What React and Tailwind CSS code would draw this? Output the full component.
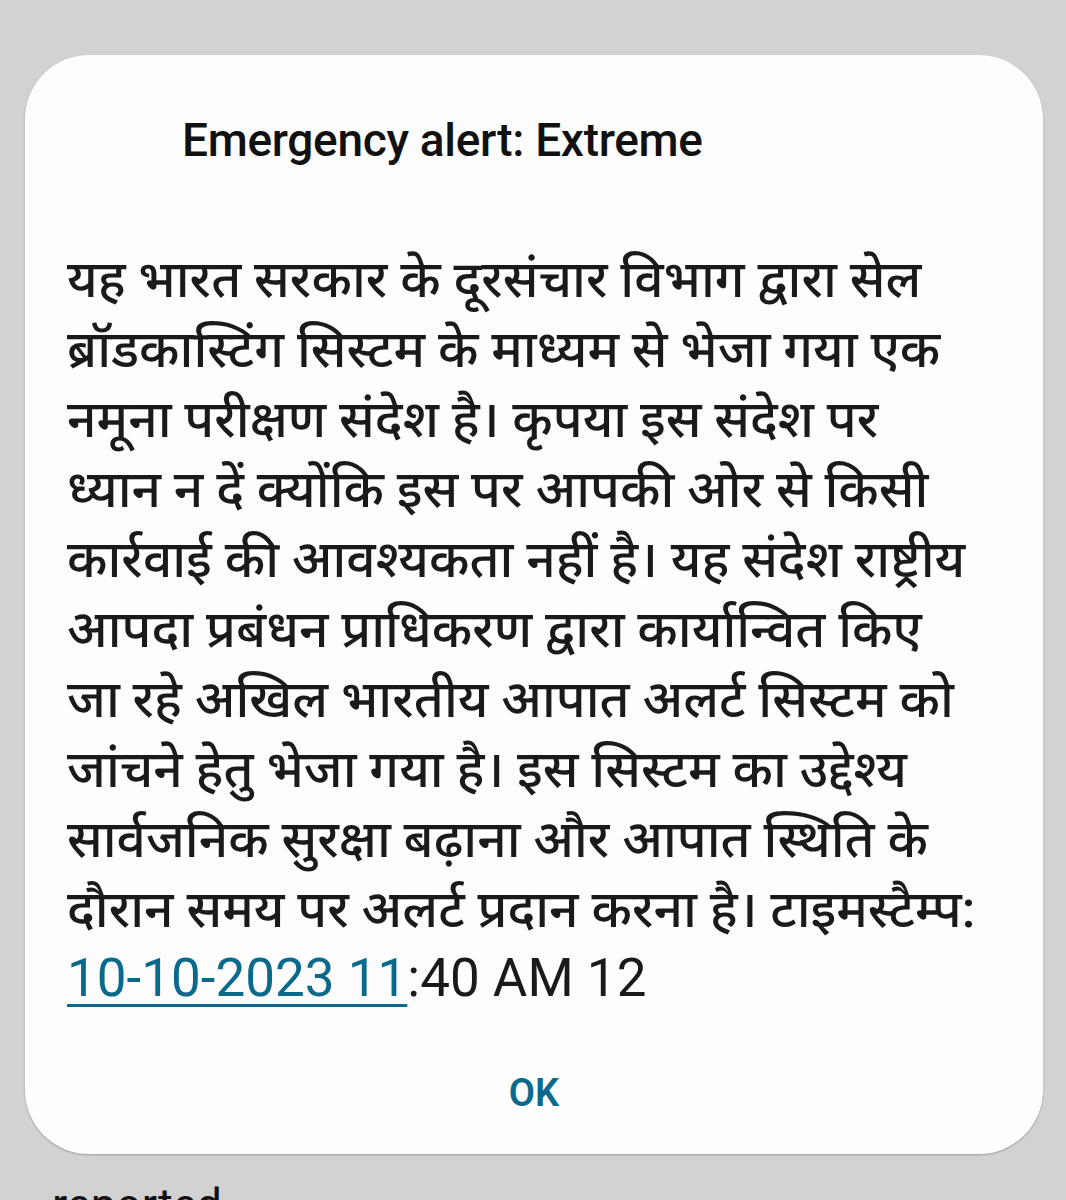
export default function App() {
  const lines = [
    "यह भारत सरकार के दूरसंचार विभाग द्वारा सेल",
    "ब्रॉडकास्टिंग सिस्टम के माध्यम से भेजा गया एक",
    "नमूना परीक्षण संदेश है। कृपया इस संदेश पर",
    "ध्यान न दें क्योंकि इस पर आपकी ओर से किसी",
    "कार्रवाई की आवश्यकता नहीं है। यह संदेश राष्ट्रीय",
    "आपदा प्रबंधन प्राधिकरण द्वारा कार्यान्वित किए",
    "जा रहे अखिल भारतीय आपात अलर्ट सिस्टम को",
    "जांचने हेतु भेजा गया है। इस सिस्टम का उद्देश्य",
    "सार्वजनिक सुरक्षा बढ़ाना और आपात स्थिति के",
    "दौरान समय पर अलर्ट प्रदान करना है। टाइमस्टैम्प:",
  ];
  return (
    <div className="w-[1066px] h-[1200px] overflow-hidden bg-[#d2d2d2] pt-[55px] pl-[25px] pr-[23px] font-['Roboto','Noto_Sans',sans-serif]">
      <div className="bg-[#fdfdfd] rounded-[64px] shadow-[0_1px_2px_rgba(0,0,0,0.25)] h-[1099px] flex flex-col">
        <div className="pl-[157px] pt-[58px] text-[46px] leading-[54px] font-medium text-[#111] tracking-[-0.3px]">
          Emergency alert: Extreme
        </div>
        <div className="pl-[42px] pt-[78px] text-[51.5px] leading-[70px] text-[#1a1a1a] font-medium">
          {lines.map((l, i) => (
            <div key={i} className="whitespace-nowrap">{l}</div>
          ))}
          <div className="whitespace-nowrap font-normal text-[53px] leading-[66px]">
            <span className="text-[#0b6a8c] underline decoration-[3px] underline-offset-[8px]">10-10-2023 11</span>
            <span>:40 AM 12</span>
          </div>
        </div>
        <div className="flex justify-center pt-[54px]">
          <span className="text-[38px] font-semibold text-[#0b6a8c]">OK</span>
        </div>
      </div>
      <div className="pl-[27px] pt-[24px] text-[45px] leading-[54px] text-[#111]">reported</div>
    </div>
  );
}
